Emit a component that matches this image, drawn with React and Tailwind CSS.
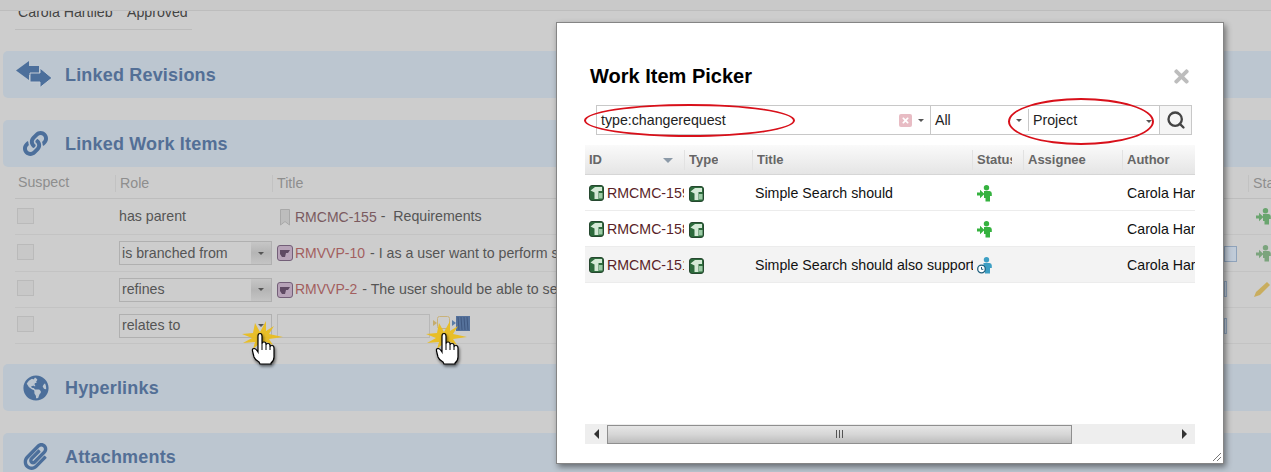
import React from 'react';
import { FaLink, FaGlobeAmericas, FaPaperclip, FaTimes } from 'react-icons/fa';
import { Search } from 'lucide-react';

const ExchangeIcon = () => (
  <svg width="36" height="27" viewBox="0 0 36 27" className="text-[#4c6f9b] -ml-[3px]" fill="currentColor">
    <path d="M0 9.5 L13 0 V5 H23 V14 H13 V19 Z" />
    <path d="M36 17 L24 26.5 V21 H14 V12 H24 V7 Z" stroke="#c4ccd5" strokeWidth="1" />
  </svg>
);

const SectionHeader = ({ icon, title, className = '' }) => (
  <div className={`h-[47px] ml-[3px] rounded-l-[5px] bg-[#bcc6d0] flex items-center ${className}`}>
    <div className="w-[62px] flex justify-center pl-[3px] text-[#4c6f9b]">{icon}</div>
    <span className="text-[18px] font-bold text-[#536f96] tracking-[0.01em] pt-[2px]">{title}</span>
  </div>
);

const PurpleIcon = () => (
  <svg width="16" height="16" viewBox="0 0 16 16" className="shrink-0">
    <rect x="0.5" y="0.5" width="15" height="15" rx="2.5" fill="#b7a3b8" stroke="#735f78" />
    <path d="M3 5 H13 L11 8 H9 L8 12 H5 L3 9 Z" fill="#5f4a63" />
  </svg>
);

const GreenItemIcon = () => (
  <svg width="15" height="16" viewBox="0 0 15 16" className="shrink-0">
    <rect x="0.5" y="0.5" width="14" height="15" rx="2.5" fill="#2d6b3c" stroke="#26472f" />
    <path d="M1.5 5.5 L6 2 H13 V6 H9.5 V14 H5.5 V7.5 Z" fill="#d5ead7" />
    <rect x="10" y="8" width="3.5" height="5.5" fill="#9ccba6" />
  </svg>
);

const PersonArrow = ({ color = '#35b23f', className = '' }) => (
  <svg width="15" height="17" viewBox="0 0 15 17" className={className} fill={color}>
    <circle cx="9.5" cy="2.8" r="2.7" />
    <path d="M7 6 H12.5 Q14.8 6 14.8 8.5 V11 H13 V16.5 H8.5 V13 H7 Z" />
    <path d="M0 7.5 H3 V4.8 L7.5 9 L3 13.2 V10.5 H0 Z" />
  </svg>
);

const PersonClock = () => (
  <svg width="15" height="17" viewBox="0 0 15 17">
    <circle cx="9.5" cy="2.8" r="2.7" fill="#3d9fc4" />
    <path d="M6.5 6 H12.5 Q14.8 6 14.8 8.5 V11 H13 V16.5 H8 V12 H6.5 Z" fill="#3d9fc4" />
    <circle cx="4.5" cy="12" r="3.8" fill="#fff" stroke="#1f5f7d" strokeWidth="1.3" />
    <path d="M4.5 10 V12.3 H6.3" fill="none" stroke="#1f5f7d" strokeWidth="1" />
  </svg>
);

const PointerHand = ({ className }) => (
  <svg width="44" height="50" viewBox="0 0 44 50" className={`absolute overflow-visible ${className}`}>
    <defs>
      <filter id="handShadow" x="-30%" y="-30%" width="170%" height="170%">
        <feDropShadow dx="1" dy="2" stdDeviation="1.6" floodColor="#000" floodOpacity="0.55" />
      </filter>
    </defs>
    <path
      transform="translate(-3 0)"
      d="M14 4 L19 13 L25 2 L25 12 L33 7 L28 15 L42 18 L28 20 L32 26 L25 23 L24 30 L19 24 L12 30 L14 23 L2 24 L11 19 L1 15 L12 14 Z"
      fill="#e9bd1f"
      opacity="0.95"
    />
    <g transform="translate(-1 5)">
      <path
        d="M15 12 Q15 9.5 17 9.5 Q19 9.5 19 12 V20 Q19 18 21 18 Q23 18 23 20 V21 Q23 19.5 25 19.5 Q27 19.5 27 21.5 V23 Q27 21.5 29 21.5 Q31 21.5 31 24 V33 Q31 37 28 39 V40 H17 L16 38 Q12 36 11 33 L9.5 27 Q9 24.5 11 24.5 Q13 24.5 15 28 Z"
        fill="#fff"
        stroke="#000"
        strokeWidth="1.2"
        filter="url(#handShadow)"
      />
      <path d="M19 20 V26 M23 21 V26 M27 23 V26" stroke="#000" strokeWidth="1" />
    </g>
  </svg>
);

const Caret = ({ className = '' }) => (
  <span className={`w-0 h-0 border-x-[3px] border-x-transparent border-t-[3px] border-t-[#555] ${className}`} />
);

const RoleSelect = ({ value, flat }) => (
  <div className="w-[153px] h-[24px] border border-[#b0b0b0] flex items-center text-[14.2px] text-[#555] shrink-0">
    <span className="pl-[2px] flex-1">{value}</span>
    <span className={`w-[20px] h-full flex items-center justify-center ${flat ? '' : 'bg-gradient-to-b from-[#c6c6c6] via-[#b5b5b5] to-[#c4c4c4]'}`}>
      <Caret />
    </span>
  </div>
);

const Checkbox = () => (
  <div className="w-[17px] h-[16px] border border-[#bababa] bg-[#c8c8c8] ml-[2px] -mt-[2px] shrink-0" />
);

const LinkedRow = ({ children, role, className = '' }) => (
  <div className={`h-[36.25px] flex items-center border-b border-[#c3c3c3] ml-[15px] ${className}`}>
    <div className="w-[104px] shrink-0">
      <Checkbox />
    </div>
    <div className="w-[158px] shrink-0 pt-[1px]">{role}</div>
    <div className="flex-1 flex items-center text-[14.2px] text-[#555] whitespace-nowrap overflow-hidden min-w-0 pt-[1px]">
      {children}
    </div>
  </div>
);

const columns = [
  { label: 'ID', width: 'w-[100px]' },
  { label: 'Type', width: 'w-[68px]' },
  { label: 'Title', width: 'w-[220px]' },
  { label: 'Status', width: 'w-[51px]', clip: 'w-[35px]' },
  { label: 'Assignee', width: 'w-[99px]' },
  { label: 'Author', width: 'w-[72px]' },
];

const pickerRows = [
  { id: 'RMCMC-159', title: 'Simple Search should', status: <PersonArrow /> },
  { id: 'RMCMC-158', title: '', status: <PersonArrow /> },
  { id: 'RMCMC-151', title: 'Simple Search should also support', status: <PersonClock />, shaded: true },
];

const WorkItemPicker = () => (
  <div className="absolute left-[556px] top-[22px] w-[668px] h-[442px] bg-white border border-[#858585] shadow-[2px_3px_6px_rgba(0,0,0,0.45)] pl-[28px] pr-[28px] pt-[38px]">
    <div className="flex items-start pl-[5px] pr-[5px] h-[44px]">
      <h2 className="flex-1 text-[20px] leading-[30px] font-bold text-black">Work Item Picker</h2>
      <FaTimes className="text-[#bdbdbd] text-[21px] mt-[5px] -mr-[2px]" />
    </div>

    <div className="ml-[11px] w-[596px] h-[30px] border border-[#c8c8c8] flex items-center text-[14.2px] text-[#222]">
      <span className="pl-[4px] w-[302px] pt-[1px]">type:changerequest</span>
      <span className="w-[13px] h-[13px] bg-[#e8bcc4] text-white flex items-center justify-center rounded-[2px] shrink-0">
        <FaTimes className="text-[9px]" />
      </span>
      <Caret className="ml-[6px]" />
      <span className="ml-[6px] w-[82px] h-full border-l border-[#c8c8c8] pl-[4px] pt-[2px] flex items-center">All</span>
      <span className="w-[14px] flex justify-center"><Caret /></span>
      <span className="ml-[2px] h-[22px] border-l border-[#c8c8c8] pl-[4px] w-[131px] flex items-center pt-[2px]">
        <span className="flex-1">Project</span>
        <Caret className="mr-[7px]" />
      </span>
      <span className="flex-1 h-full flex items-center justify-center border-l border-[#c8c8c8] bg-[#f5f5f5]">
        <Search size={20} strokeWidth={2.8} className="text-[#444]" />
      </span>
    </div>

    <div className="w-[610px] mt-[10px] overflow-hidden">
      <div className="h-[30px] flex items-center bg-gradient-to-b from-[#fafafa] to-[#e5e5e5] border-b border-[#d6d6d6] text-[13px] font-bold text-[#666]">
        {columns.map((col) => (
          <div key={col.label} className={`${col.width} shrink-0 h-[20px] pl-[4px] border-r border-[#e2e2e2] whitespace-nowrap flex items-center relative last:border-r-0`}>
            <span className={`overflow-hidden ${col.clip || ''}`}>{col.label}</span>
            {col.label === 'ID' && (
              <span className="absolute right-[11px] top-[8px] w-0 h-0 border-x-[5px] border-x-transparent border-t-[5px] border-t-[#8c9aa8]" />
            )}
          </div>
        ))}
      </div>
      {pickerRows.map((row) => (
        <div key={row.id} className={`h-[36px] pt-[2px] flex items-center text-[14.2px] text-[#111] border-b border-[#ececec] ${row.shaded ? 'bg-[#f3f3f3]' : ''}`}>
          <div className="w-[100px] shrink-0 pl-[4px] flex items-center gap-[3px] overflow-hidden">
            <GreenItemIcon />
            <span className="text-[#5a1f28] whitespace-nowrap w-[77px] overflow-hidden">{row.id}</span>
          </div>
          <div className="w-[68px] shrink-0 pl-[4px]"><GreenItemIcon /></div>
          <div className="w-[220px] shrink-0 pl-[2px] overflow-hidden whitespace-nowrap">{row.title}</div>
          <div className="w-[51px] shrink-0 pl-[4px]">{row.status}</div>
          <div className="w-[99px] shrink-0" />
          <div className="w-[72px] shrink-0 pl-[4px] overflow-hidden whitespace-nowrap">Carola Hartlieb</div>
        </div>
      ))}
    </div>

    <div className="absolute left-[28px] top-[401px] w-[610px] h-[20px] bg-[#eeeeee] flex items-center">
      <div className="w-[22px] flex justify-center">
        <span className="w-0 h-0 border-y-[5px] border-y-transparent border-r-[5px] border-r-[#333]" />
      </div>
      <div className="w-[465px] h-[19px] border border-[#8f8f8f] bg-gradient-to-b from-[#e6e6e6] via-[#d6d6d6] to-[#bdbdbd] flex items-center justify-center gap-[2px]">
        <span className="w-px h-[8px] bg-[#555]" />
        <span className="w-px h-[8px] bg-[#555]" />
        <span className="w-px h-[8px] bg-[#555]" />
      </div>
      <div className="flex-1 flex justify-end pr-[8px]">
        <span className="w-0 h-0 border-y-[5px] border-y-transparent border-l-[5px] border-l-[#333]" />
      </div>
    </div>

    <svg width="10" height="10" viewBox="0 0 10 10" className="absolute right-[1px] bottom-[1px]" stroke="#777">
      <path d="M1 9 L9 1 M5 9 L9 5" />
    </svg>

    <div className="absolute left-[27px] top-[81px] w-[211px] h-[33px] border-2 border-[#d8101a] rounded-[50%]" />
    <div className="absolute left-[451px] top-[75px] w-[146px] h-[47px] border-2 border-[#d8101a] rounded-[50%]" />
  </div>
);

export default function App() {
  return (
    <div className="relative w-[1271px] h-[472px] overflow-hidden bg-[#cdcdcd] font-['Liberation_Sans',Arial,sans-serif]">
      <div className="h-[11px] bg-[#c9c9c9] border-b border-[#bdbdbd]" />
      <div className="h-[19px] w-[177px] ml-[15px] border-b border-[#bcbcbc] text-[14.2px] leading-[16px] text-[#444] pl-[3px] whitespace-nowrap overflow-hidden">
        <div className="-mt-[7px] flex">
          <span className="w-[109px]">Carola Hartlieb</span>
          <span>Approved</span>
        </div>
      </div>

      <SectionHeader className="mt-[21px]" icon={<ExchangeIcon />} title="Linked Revisions" />
      <SectionHeader className="mt-[22px]" icon={<FaLink className="text-[25px]" />} title="Linked Work Items" />

      <div className="h-[32px] ml-[15px] flex items-center border-b border-[#bdbdbd] text-[14.2px] text-[#8e8e8e] pt-[1px]">
        <div className="w-[100px] pl-[3px]">Suspect</div>
        <div className="w-[157px] h-[17px] pl-[4px] border-l border-[#c2c2c2] leading-[17px]">Role</div>
        <div className="h-[17px] pl-[4px] border-l border-[#c2c2c2] leading-[17px] flex-1">Title</div>
      </div>

      <LinkedRow role={<div className="text-[14.2px] text-[#555]">has parent</div>}>
        <svg width="10" height="17" viewBox="0 0 10 17" className="ml-[3px] mr-[5px] shrink-0">
          <path d="M0.5 0.5 H9.5 V16 L5 12.5 L0.5 16 Z" fill="#bdbdbd" stroke="#a8a8a8" />
        </svg>
        <span className="text-[14px] text-[#7a5a60]">RMCMC-155</span>
        <span className="ml-[4px]">-&nbsp; Requirements</span>
      </LinkedRow>
      <LinkedRow role={<RoleSelect value="is branched from" />}>
        <PurpleIcon />
        <span className="text-[14px] text-[#a35f5f] ml-[2px]">RMVVP-10</span>
        <span className="ml-[5px]">- I as a user want to perform search against different requirement types</span>
      </LinkedRow>
      <LinkedRow role={<RoleSelect value="refines" />}>
        <PurpleIcon />
        <span className="text-[14px] text-[#a35f5f] ml-[2px]">RMVVP-2</span>
        <span className="ml-[5px]">- The user should be able to search for requirements by type</span>
      </LinkedRow>
      <LinkedRow role={<RoleSelect value="relates to" flat />}>
        <div className="w-[153px] h-[24px] border border-[#b8b8b8] shrink-0" />
        <svg width="37" height="17" viewBox="0 0 37 17" className="ml-[3px] -mt-[4px] shrink-0">
          <path d="M0 5 L4 8 L0 11 Z" fill="#c4ac6e" />
          <rect x="4.5" y="1.5" width="12" height="12" rx="2" fill="none" stroke="#c9b27a" />
          <path d="M19 5 L23 8 L19 11 Z" fill="#5a7da8" />
          <rect x="23" y="1" width="14" height="15" fill="#55719b" />
          <path d="M25 2 L26 15 M28 2 L29 15 M31 2 L32 15 M34 2 L35 15" stroke="#3f5880" strokeWidth="1" />
        </svg>
      </LinkedRow>

      <SectionHeader className="mt-[20px]" icon={<FaGlobeAmericas className="text-[26px]" />} title="Hyperlinks" />
      <SectionHeader className="mt-[22px]" icon={<FaPaperclip className="text-[27px]" />} title="Attachments" />

      <div className="absolute left-[1248px] top-[175px] h-[17px] border-l border-[#c2c2c2] pl-[4px] text-[14.2px] leading-[17px] text-[#8e8e8e] overflow-hidden w-[23px]">Sta</div>
      <PersonArrow color="#6aa56f" className="absolute left-[1256px] top-[208px]" />
      <PersonArrow color="#7ba47d" className="absolute left-[1256px] top-[245px]" />
      <svg width="18" height="18" viewBox="0 0 18 18" className="absolute left-[1253px] top-[280px]">
        <path d="M1 17 L3 12 L14 2 L17 5 L7 15 Z" fill="#c9ad5e" />
      </svg>
      <div className="absolute left-[1224px] top-[246px] w-[13px] h-[16px] bg-[#c0cbd8] border border-[#8fa3bb]" />
      <div className="absolute left-[1224px] top-[281px] w-[3px] h-[16px] bg-[#c0cbd8] border border-[#8fa3bb]" />
      <div className="absolute left-[1224px] top-[318px] w-[3px] h-[16px] bg-[#c0cbd8] border border-[#8fa3bb]" />

      <PointerHand className="left-[244px] top-[319px]" />
      <PointerHand className="left-[428px] top-[319px]" />

      <WorkItemPicker />
    </div>
  );
}
